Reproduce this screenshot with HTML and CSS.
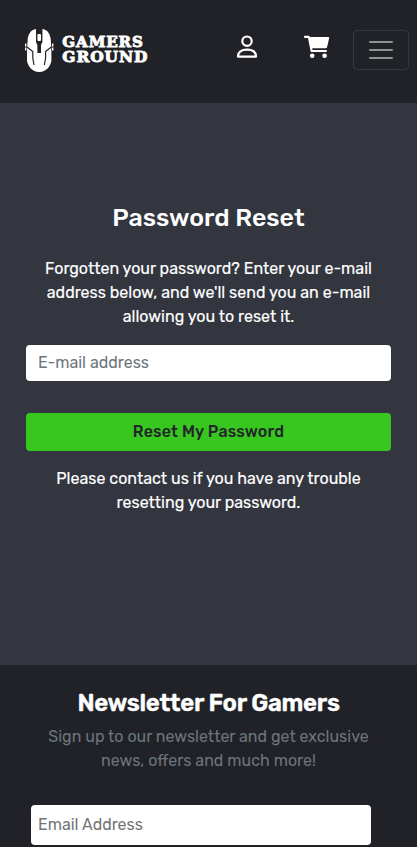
FILE: index.html
```html
<!DOCTYPE html>
<html lang="en">
<head>
<meta charset="utf-8">
<title>Password Reset</title>
<link rel="stylesheet" href="styles.css">
</head>
<body>
<header class="header">
  <a class="logo">
    <svg width="126" height="46" viewBox="0 0 126 46">
      <path fill="#fff" d="M12 2 C6.5 3 4.2 7 3.6 13 L3 25 L3 34 C4 39 8 45 15.2 45 C22.5 45 26.4 39 27.4 34 L27.4 25 L26.8 13 C26.2 7 24 3 18.4 2 V15 L17 18 V26 H13.4 V18 L12 15Z"/>
      <rect x="13.4" y="7" width="3.6" height="7" rx="1" fill="#fff"/>
      <path fill="none" stroke="#212227" stroke-width="1.2" d="M3 20 L8.8 24.5 V31 L10 38 M27.4 20 L21.6 24.5 V31 L20.4 38"/>
      <path fill="#fff" d="M1 16.5h1.4v3H1zM1 20.5h1.4v3H1zM28 16.5h1.4v3H28zM28 20.5h1.4v3H28z"/>
      <text class="logo-text" x="38.3" y="20.4" textLength="81.5" lengthAdjust="spacingAndGlyphs">GAMERS</text>
      <text class="logo-text" x="38.3" y="35.4" textLength="86" lengthAdjust="spacingAndGlyphs">GROUND</text>
    </svg>
  </a>
  <nav class="tools">
    <svg class="user" width="22" height="24" viewBox="0 0 22 24" fill="none" stroke="#fff" stroke-width="2.2">
      <circle cx="11" cy="6.2" r="4.7"/>
      <path stroke-linejoin="round" d="M2 21.6 C2 16.9 5.5 14.7 11 14.7 S20 16.9 20 21.6Z"/>
    </svg>
    <svg class="cart" width="27" height="24" viewBox="0 0 27 24" fill="#fff">
      <path d="M.8 .8H4.8Q5.6 .8 5.8 2H24.5Q25.5 2 25.2 3.1L23.1 12Q22.8 13.3 21.4 13.3H8.2L8.5 15H22Q23 15 23 16T22 17.1H7.7Q6.8 17.1 6.6 16.2L4 3H.8Q0 3 0 1.9T.8 .8Z"/>
      <circle cx="8.2" cy="20.7" r="2.3"/><circle cx="20.6" cy="20.7" r="2.3"/>
    </svg>
    <button class="toggle" aria-label="Menu">
      <svg width="30" height="30" viewBox="0 0 30 30"><path d="M4 7h22M4 15h22M4 23h22" stroke="rgba(255,255,255,.5)" stroke-width="2" stroke-linecap="round" stroke-miterlimit="10"/></svg>
    </button>
  </nav>
</header>
<main class="main">
  <h1 class="title">Password Reset</h1>
  <p class="copy">Forgotten your password? Enter your e-mail<br>address below, and we'll send you an e-mail<br>allowing you to reset it.</p>
  <input class="email" type="email" placeholder="E-mail address">
  <button class="reset">Reset My Password</button>
  <p class="copy">Please contact us if you have any trouble<br>resetting your password.</p>
</main>
<footer class="footer">
  <h2 class="news-title">Newsletter For Gamers</h2>
  <p class="news-copy">Sign up to our newsletter and get exclusive<br>news, offers and much more!</p>
  <input class="news-email" type="email" placeholder="Email Address">
</footer>
</body>
</html>
```
FILE: styles.css
```css
* { box-sizing: border-box; }
body {
  margin: 0;
  height: 847px;
  overflow: hidden;
  background: #212227;
  color: #fff;
  font: 16px/24px Rubik, Roboto, sans-serif;
}
h1, h2, p { margin: 0; text-align: center; white-space: nowrap; }
input, button { font: inherit; border: 0; border-radius: 4px; }
.header {
  height: 103px;
  padding: 27px 8px 0 24px;
  display: flex;
  justify-content: space-between;
  align-items: flex-start;
}
.logo svg { display: block; }
.logo-text {
  font: bold 15.5px "DejaVu Serif", serif;
  letter-spacing: .9px;
  fill: #fff;
  stroke: #fff;
  stroke-width: .9px;
}
.tools { display: flex; align-items: flex-start; }
.user { margin: 8px 46px 0 0; }
.cart { margin: 8px 22px 0 0; }
.toggle {
  width: 56px;
  height: 40px;
  margin-top: 3px;
  padding: 0;
  border: 1px solid rgba(255, 255, 255, .1);
  background: transparent;
  display: flex;
  align-items: center;
  justify-content: center;
}
.main {
  height: 562px;
  padding: 100px 26px 0;
  background: #33363f;
}
.title { font-size: 25px; font-weight: 500; line-height: 30px; margin-bottom: 24px; }
.copy { -webkit-text-stroke: .15px #fff; }
.email {
  display: block;
  width: 100%;
  height: 36px;
  margin: 16px 0 32px;
  padding: 0 12px 1px;
}
.email::placeholder { color: #6c757d; opacity: 1; }
.reset {
  display: block;
  width: 100%;
  height: 38px;
  margin-bottom: 16px;
  padding: 0;
  background: #37c71e;
  color: #212529;
  font-weight: 500;
  letter-spacing: .16px;
}
.footer { height: 182px; padding: 24px 31px 0; }
.news-title { font-size: 24px; font-weight: 600; line-height: 29px; margin-bottom: 7px; letter-spacing: -.33px; -webkit-text-stroke: .35px #fff; }
.news-copy { color: #6c757d; }
.news-email { display: block; width: 340px; height: 40px; margin-top: 32px; padding: 0 8px 1px 7px; }
.news-email::placeholder { color: #757575; opacity: 1; }
```
